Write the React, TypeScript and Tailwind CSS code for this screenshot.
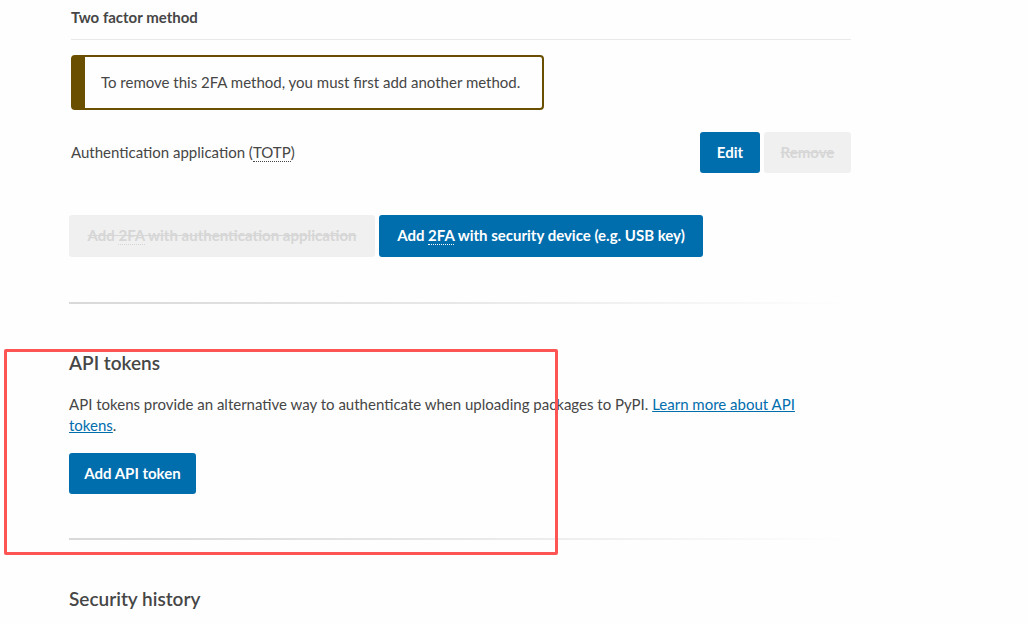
import React from 'react';

const font = { fontFamily: 'Lato, "Noto Sans", sans-serif' };

// dotted underline abbreviation, like <abbr> on the page
function Abbr({ children, title }: { children: React.ReactNode; title: string }) {
  return (
    <abbr title={title} className="no-underline border-b-[1.5px] border-dotted border-current leading-none">
      {children}
    </abbr>
  );
}

function Separator() {
  return <div className="h-[2px] w-full bg-gradient-to-r from-[#d9d9d9] via-[#e8e8e8] to-transparent" />;
}

export default function App() {
  return (
    <div className="relative min-h-screen bg-[#fefefe] text-[#464646]" style={font}>
      <div className="ml-[69px] w-[782px]">
        {/* Two factor table */}
        <div className="pl-[2px]">
          <div className="pt-[6px] pb-[10px] text-[15px] font-bold">Two factor method</div>
          <div className="h-px bg-[#e9e9e9]" />

          <div className="mt-[15px] w-[473px] h-[55px] flex items-center rounded-[4px] border-2 border-l-[14px] border-[#6a4f00] pl-[16px] text-[15px]">
            To remove this 2FA method, you must first add another method.
          </div>

          <div className="mt-[22px] flex items-center justify-between">
            <span className="text-[15px]">
              Authentication application (<Abbr title="Time-based One-Time Password">TOTP</Abbr>)
            </span>
            <div className="flex gap-[4px]">
              <button className="h-[41px] w-[60px] rounded-[3px] bg-[#006dad] text-white text-[15px] font-bold">Edit</button>
              <button disabled className="h-[41px] w-[87px] rounded-[3px] bg-[#f0f0f0] text-[#d6d6d6] text-[15px] font-bold line-through">
                Remove
              </button>
            </div>
          </div>
        </div>

        <div className="mt-[42px] flex gap-[4px]">
          <button disabled className="h-[42px] w-[306px] rounded-[3px] bg-[#f0f0f0] text-[#d6d6d6] text-[15px] font-bold line-through">
            Add <Abbr title="Two factor authentication">2FA</Abbr> with authentication application
          </button>
          <button className="h-[42px] w-[324px] rounded-[3px] bg-[#006dad] text-white text-[15px] font-bold">
            Add <Abbr title="Two factor authentication">2FA</Abbr> with security device (e.g. USB key)
          </button>
        </div>

        <div className="mt-[45px]">
          <Separator />
        </div>

        {/* API tokens */}
        <section className="pt-[46px] pb-[44px]">
          <h2 className="text-[19px] font-semibold leading-[26px]">API tokens</h2>
          <p className="mt-[18px] w-[760px] text-[15px] leading-[21px]">
            API tokens provide an alternative way to authenticate when uploading packages to PyPI.{' '}
            <a href="#" className="text-[#006dad] underline">Learn more about API tokens</a>.
          </p>
          <button className="mt-[17px] h-[41px] w-[127px] rounded-[3px] bg-[#006dad] text-white text-[15px] font-bold">
            Add API token
          </button>
        </section>

        <Separator />

        <h2 className="pt-[46px] text-[19px] font-semibold leading-[26px]">Security history</h2>
      </div>

      {/* red highlight annotation */}
      <div className="absolute left-[4px] top-[349px] w-[554px] h-[206px] rounded-[2px] border-[3px] border-[#fd5454] pointer-events-none" />
    </div>
  );
}
